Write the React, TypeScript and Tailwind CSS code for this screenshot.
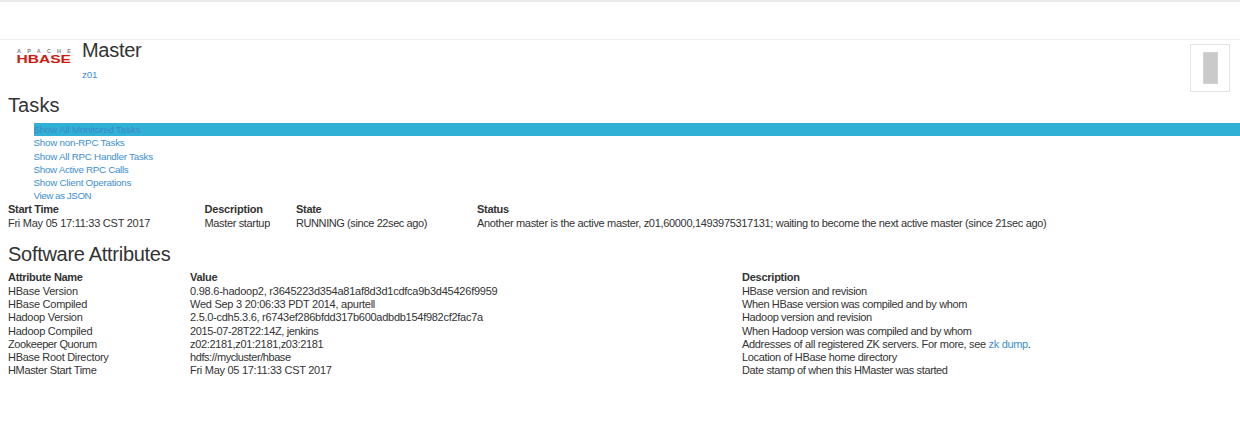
import type { ReactNode } from "react";

const taskLinks = [
  { label: "Show non-RPC Tasks", tracking: "tracking-[-0.23px]" },
  { label: "Show All RPC Handler Tasks", tracking: "tracking-[-0.24px]" },
  { label: "Show Active RPC Calls", tracking: "tracking-[-0.3px]" },
  { label: "Show Client Operations", tracking: "tracking-[-0.24px]" },
  { label: "View as JSON", tracking: "tracking-[-0.44px]" },
];

type Cell = { text: ReactNode; tracking: string };

const attributes: { id: string; cells: Cell[] }[] = [
  { id: "version", cells: [
    { text: "HBase Version", tracking: "tracking-[-0.23px]" },
    { text: "0.98.6-hadoop2, r3645223d354a81af8d3d1cdfca9b3d45426f9959", tracking: "tracking-[-0.24px]" },
    { text: "HBase version and revision", tracking: "tracking-[-0.35px]" },
  ] },
  { id: "compiled", cells: [
    { text: "HBase Compiled", tracking: "tracking-[-0.25px]" },
    { text: "Wed Sep 3 20:06:33 PDT 2014, apurtell", tracking: "tracking-[-0.26px]" },
    { text: "When HBase version was compiled and by whom", tracking: "tracking-[-0.385px]" },
  ] },
  { id: "hadoop-version", cells: [
    { text: "Hadoop Version", tracking: "tracking-[-0.27px]" },
    { text: "2.5.0-cdh5.3.6, r6743ef286bfdd317b600adbdb154f982cf2fac7a", tracking: "tracking-[-0.27px]" },
    { text: "Hadoop version and revision", tracking: "tracking-[-0.355px]" },
  ] },
  { id: "hadoop-compiled", cells: [
    { text: "Hadoop Compiled", tracking: "tracking-[-0.25px]" },
    { text: "2015-07-28T22:14Z, jenkins", tracking: "tracking-[-0.35px]" },
    { text: "When Hadoop version was compiled and by whom", tracking: "tracking-[-0.4px]" },
  ] },
  { id: "quorum", cells: [
    { text: "Zookeeper Quorum", tracking: "tracking-[-0.42px]" },
    { text: "z02:2181,z01:2181,z03:2181", tracking: "tracking-[-0.33px]" },
    { text: <>Addresses of all registered ZK servers. For more, see <a href="#" className="text-[#3d8fd3]">zk dump</a>.</>, tracking: "tracking-[-0.325px]" },
  ] },
  { id: "root", cells: [
    { text: "HBase Root Directory", tracking: "tracking-[-0.29px]" },
    { text: "hdfs://mycluster/hbase", tracking: "tracking-[-0.43px]" },
    { text: "Location of HBase home directory", tracking: "tracking-[-0.34px]" },
  ] },
  { id: "start", cells: [
    { text: "HMaster Start Time", tracking: "tracking-[-0.35px]" },
    { text: "Fri May 05 17:11:33 CST 2017", tracking: "tracking-[-0.28px]" },
    { text: "Date stamp of when this HMaster was started", tracking: "tracking-[-0.38px]" },
  ] },
];

function Logo() {
  return (
    <svg width="56" height="18" viewBox="0 0 56 18" role="img" aria-label="Apache HBase">
      <text x="1" y="5.8" textLength="54" lengthAdjust="spacing" fill="#808080" fontFamily="Liberation Sans" fontSize="5.5" fontWeight="700">APACHE</text>
      <text x="0.5" y="16" textLength="54.5" lengthAdjust="spacingAndGlyphs" fill="#cc1c10" fontFamily="Liberation Sans" fontSize="11.5" fontWeight="700">HBASE</text>
    </svg>
  );
}

export default function App() {
  return (
    <div className="h-[428px] w-full overflow-hidden bg-white font-['Liberation_Sans',Arial,sans-serif] text-[11px] leading-[13.2px] text-[#333]">
      <div className="h-10 border-t-2 border-b border-t-[#e9e9e9] border-b-[#ededed]" />
      <header className="flex h-[53px] items-start justify-between pr-[10px] pl-4">
        <div className="flex">
          <div className="w-[66px] pt-[7px]"><Logo /></div>
          <div>
            <h1 className="text-[20px] leading-[20px] tracking-[-0.3px]">Master</h1>
            <a href="#" className="mt-2 block text-[9.8px] leading-[13px] tracking-[-0.2px] text-[#3d8fd3]">z01</a>
          </div>
        </div>
        <div className="mt-1 flex h-[48px] w-[40px] items-center justify-center border border-[#e4e4e4]">
          <div className="h-8 w-[15px] border border-[#d4d4d4] bg-[#cacaca]" />
        </div>
      </header>

      <section className="pl-2">
        <h2 className="text-[20px] leading-[24px] tracking-[0.1px]">Tasks</h2>
        <ul className="mt-[6px] pl-[25.5px] text-[9.8px] text-[#3d8fd3]">
          <li className="h-[13.2px] bg-[#31b0d5] tracking-[-0.2px]"><a href="#" className="text-[#3b8cc8]">Show All Monitored Tasks</a></li>
          {taskLinks.map(({ label, tracking }) => (
            <li key={label} className="h-[13.2px] pt-[0.2px]"><a href="#" className={tracking}>{label}</a></li>
          ))}
        </ul>
        <div className="grid grid-cols-[196.5px_91.5px_181px_1fr] gap-y-[0.6px] pt-[0.9px] whitespace-nowrap">
          <b className="tracking-[-0.3px]">Start Time</b>
          <b className="tracking-[-0.2px]">Description</b>
          <b className="tracking-[-0.3px]">State</b>
          <b className="tracking-[-0.3px]">Status</b>
          <span className="tracking-[-0.26px]">Fri May 05 17:11:33 CST 2017</span>
          <span className="tracking-[-0.35px]">Master startup</span>
          <span className="tracking-[-0.41px]">RUNNING (since 22sec ago)</span>
          <span className="tracking-[-0.32px]">Another master is the active master, z01,60000,1493975317131; waiting to become the next active master (since 21sec ago)</span>
        </div>
      </section>

      <section className="pl-2">
        <h2 className="mt-[11.5px] text-[20px] leading-[24px] tracking-[-0.29px]">Software Attributes</h2>
        <div className="mt-[5.6px] grid grid-cols-[182px_552px_1fr] whitespace-nowrap">
          <b className="pb-[0.6px] tracking-[-0.3px]">Attribute Name</b>
          <b className="tracking-[-0.3px]">Value</b>
          <b className="tracking-[-0.25px]">Description</b>
          {attributes.map(({ id, cells }) => (
            <div key={id} className="contents">
              {cells.map(({ text, tracking }, column) => (
                <span key={column} className={tracking}>{text}</span>
              ))}
            </div>
          ))}
        </div>
      </section>
    </div>
  );
}
